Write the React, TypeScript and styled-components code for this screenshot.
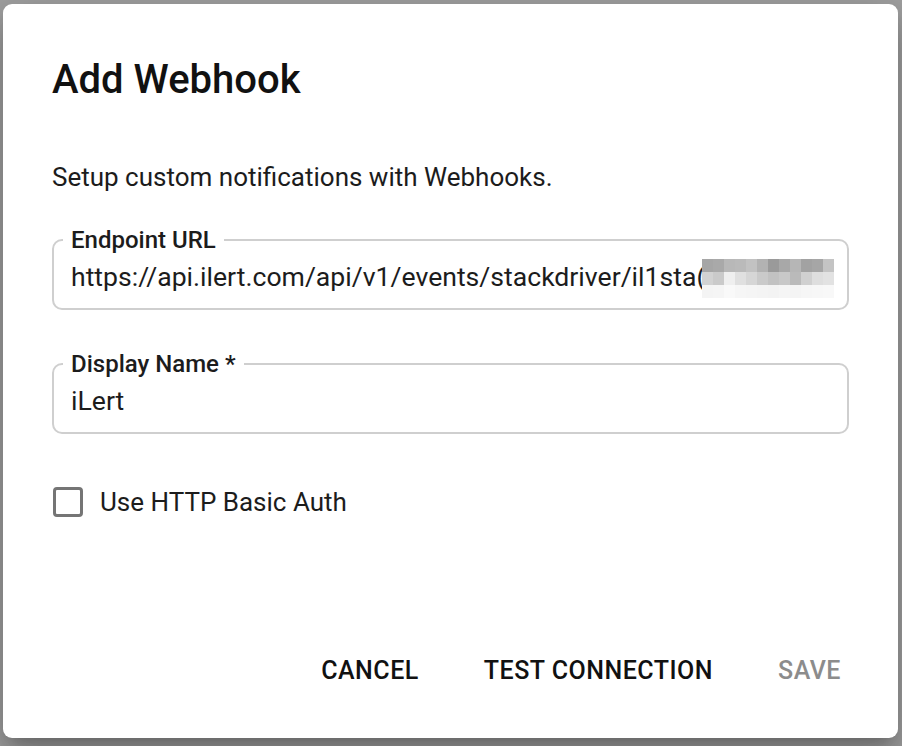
import styled, { createGlobalStyle } from "styled-components";

const GlobalStyle = createGlobalStyle`
  html, body {
    margin: 0;
    padding: 0;
    background: #a0a0a0;
    font-family: Roboto, "Liberation Sans", Arial, sans-serif;
  }
  #root {
    min-height: 746px;
  }
`;

const Page = styled.div`
  height: 746px;
  padding: 4px 4px 0 3px;
  box-sizing: border-box;
  overflow: hidden;
`;

const Dialog = styled.div`
  width: 895px;
  height: 734px;
  box-sizing: border-box;
  background: #fff;
  border-radius: 9px;
  display: flex;
  flex-direction: column;
  padding: 52px 0 44px 0;
  box-shadow: 0 11px 15px -7px rgba(0, 0, 0, 0.2),
    0 24px 38px 3px rgba(0, 0, 0, 0.14), 0 9px 46px 8px rgba(0, 0, 0, 0.12);
`;

const Title = styled.h2`
  margin: 0;
  padding: 0 49px;
  font-size: 40px;
  line-height: 48px;
  font-weight: 500;
  color: #111;
`;

const Content = styled.div`
  padding: 55px 49px 0 49px;
  display: flex;
  flex-direction: column;
`;

const Intro = styled.p`
  margin: 0 0 31px 0;
  font-size: 26px;
  line-height: 36px;
  color: #1c1c1c;
`;

const Field = styled.fieldset<{ $gap?: number }>`
  margin: 0 0 ${(p) => p.$gap ?? 0}px 0;
  padding: 0 9px 10px 9px;
  border: 2px solid #cfcfcf;
  border-radius: 10px;
  min-width: 0;
`;

const Legend = styled.legend`
  padding: 0 8px;
  font-size: 24px;
  line-height: 28px;
  font-weight: 500;
  color: #1c1c1c;
`;

const Value = styled.div`
  height: 44px;
  padding: 0 8px;
  display: flex;
  align-items: center;
  font-size: 26.6px;
  color: #1c1c1c;
  white-space: nowrap;
  overflow: hidden;
`;

// pixelated redaction over the end of the URL
const Mosaic = styled.span`
  display: inline-grid;
  grid-template-columns: repeat(12, 11px);
  grid-auto-rows: 13px;
  margin-left: -4px;
  align-self: center;
  margin-top: 5px;
`;

const Cell = styled.span`
  display: block;
`;

const CheckRow = styled.label`
  display: flex;
  align-items: center;
  gap: 17px;
  height: 36px;
  margin-top: 50px;
  padding-left: 1px;
  font-size: 26px;
  color: #1c1c1c;
`;

const Box = styled.span`
  width: 30px;
  height: 30px;
  box-sizing: border-box;
  border: 3px solid #757575;
  border-radius: 4px;
`;

const Footer = styled.div`
  margin-top: auto;
  display: flex;
  justify-content: flex-end;
  gap: 33px;
  padding-right: 41px;
`;

const Button = styled.button<{ $disabled?: boolean }>`
  border: none;
  background: none;
  padding: 0 16px;
  height: 48px;
  font-family: inherit;
  font-size: 25px;
  font-weight: 500;
  letter-spacing: 0.5px;
  text-transform: uppercase;
  color: ${(p) => (p.$disabled ? "#8c8c8c" : "#111")};
  cursor: ${(p) => (p.$disabled ? "default" : "pointer")};
`;

const mosaicShades = [
  ["#a6a6a6", "#a9a9a9", "#b8b8b8", "#bababa", "#c2c2c2", "#b2b2b2", "#9a9a9a", "#a8a8a8", "#b6b6b6", "#a2a2a2", "#a6a6a6", "#c4c4c4"],
  ["#d2d2d2", "#cacaca", "#efefef", "#e0e0e0", "#d6d6d6", "#cacaca", "#c2c2c2", "#c8c8c8", "#bababa", "#d0d0d0", "#dedede", "#e2e2e2"],
  ["#f4f4f4", "#f5f5f5", "#f9f9f9", "#f6f6f6", "#f5f5f5", "#f4f4f4", "#f3f3f3", "#f5f5f5", "#f4f4f4", "#f6f6f6", "#f7f7f7", "#f8f8f8"],
];

export default function App() {
  return (
    <>
      <GlobalStyle />
      <Page>
        <Dialog>
          <Title>Add Webhook</Title>
          <Content>
            <Intro>Setup custom notifications with Webhooks.</Intro>
            <Field $gap={40}>
              <Legend>Endpoint URL</Legend>
              <Value>
                https://api.ilert.com/api/v1/events/stackdriver/il1sta(
                <Mosaic aria-hidden>
                  {mosaicShades.flat().map((c, i) => (
                    <Cell key={i} style={{ background: c }} />
                  ))}
                </Mosaic>
              </Value>
            </Field>
            <Field>
              <Legend>Display Name *</Legend>
              <Value>iLert</Value>
            </Field>
            <CheckRow>
              <Box />
              Use HTTP Basic Auth
            </CheckRow>
          </Content>
          <Footer>
            <Button>Cancel</Button>
            <Button>Test connection</Button>
            <Button $disabled>Save</Button>
          </Footer>
        </Dialog>
      </Page>
    </>
  );
}
